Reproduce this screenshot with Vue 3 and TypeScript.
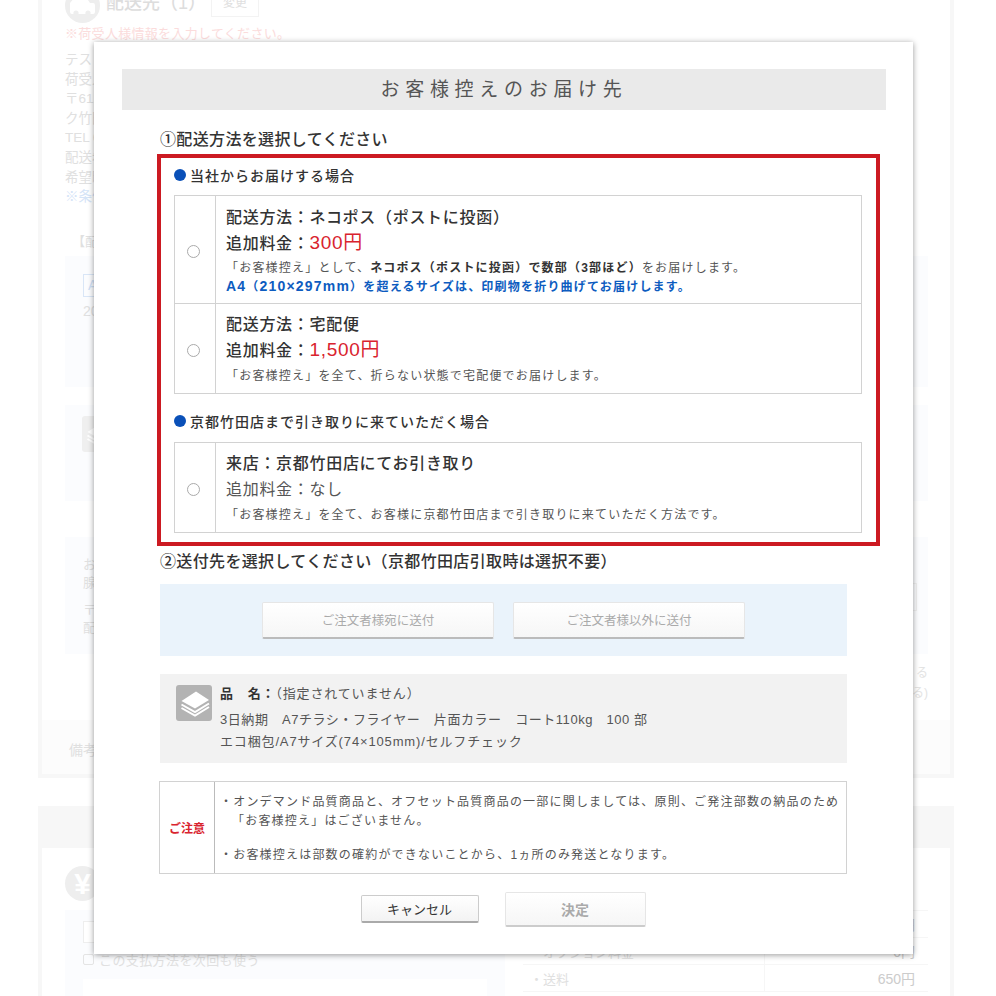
<script setup lang="ts">
interface Option {
  title: string
  price: string
  free?: boolean
}

const addressLines = ['テスト 太郎 様', '荷受人様', '〒612-8000', 'ク竹田 1-1', 'TEL 075-000', '配送希望日', '希望時間帯']
const summaryRows = [
  { label: '', value: '0円' },
  { label: '・オプション料金', value: '0円' },
  { label: '・送料', value: '650円' },
]

const nekopos: Option = { title: '配送方法\uFF1Aネコポス\uFF08ポストに投函\uFF09', price: '300円' }
const takuhai: Option = { title: '配送方法\uFF1A宅配便', price: '1,500円' }
const pickup: Option = { title: '来店\uFF1A京都竹田店にてお引き取り', price: 'なし', free: true }
</script>

<template>
  <div class="page">
    <div class="sheet">
      <section class="panel first">
        <div class="dest-head">
          <span class="circle">
            <svg width="25" height="20" viewBox="0 0 25 20">
              <path d="M5 1h11l4 6h3a2 2 0 0 1 2 2v7a2 2 0 0 1-2 2H2a2 2 0 0 1-2-2V7z" fill="#fff" />
              <circle cx="6" cy="17" r="2.6" fill="#eee" />
              <circle cx="18" cy="17" r="2.6" fill="#eee" />
            </svg>
          </span>
          <span class="dest-title">配送先&#xFF08;1&#xFF09;</span>
          <span class="ghost-btn">変更</span>
        </div>
        <p class="pink">※荷受人様情報を入力してください。</p>
        <ul class="address">
          <li v-for="line in addressLines" :key="line">{{ line }}</li>
          <li class="faint-blue">※条件</li>
        </ul>
        <p class="section-label">【配送</p>
        <div class="tint one">
          <span class="a-tag">A</span>
          <p>20</p>
        </div>
        <div class="tint two">
          <span class="stack-ghost">
            <svg width="36" height="36" viewBox="0 0 36 36">
              <path d="M20 6.5 33 15l-14 8.5L5.5 16z" fill="#fff" />
              <path d="M5.5 19.5 19 27l14-8.5M5.5 23 19 30.5 33 22" fill="none" stroke="#fff" stroke-width="2" />
            </svg>
          </span>
        </div>
        <div class="tint three">
          <p>お客様</p>
          <p>腺</p>
          <p class="spaced">〒61</p>
          <p>配</p>
          <span class="ghost-input"></span>
        </div>
        <p class="side-note">る</p>
        <p class="side-note">る)</p>
        <div class="memo">備考</div>
      </section>

      <section class="panel second">
        <div class="second-head"></div>
        <div class="second-body">
          <span class="circle yen">¥</span>
          <div class="second-grid">
            <div class="tint pay">
              <span class="pay-input"></span>
              <label class="pay-check"><i></i>この支払方法を次回も使う</label>
              <span class="pay-card"></span>
            </div>
            <table class="summary">
              <tbody>
                <tr v-for="row in summaryRows" :key="row.value + row.label">
                  <td class="sum-label">{{ row.label }}</td>
                  <td class="sum-value">{{ row.value }}</td>
                </tr>
              </tbody>
            </table>
          </div>
        </div>
      </section>
    </div>

    <div class="modal">
      <h1 class="modal-title">お客様控えのお届け先</h1>

      <h2 class="step first-step">①配送方法を選択してください</h2>
      <div class="red-box">
        <h3 class="group"><span class="dot"></span>当社からお届けする場合</h3>
        <div class="options">
          <label class="option tall">
            <span class="radio-cell"><input type="radio" name="ship" /></span>
            <span class="option-body">
              <span class="opt-title">{{ nekopos.title }}</span>
              <span class="opt-price">追加料金&#xFF1A;<em>{{ nekopos.price }}</em></span>
              <span class="opt-desc">「お客様控え」として、<b>ネコポス&#xFF08;ポストに投函&#xFF09;で数部&#xFF08;3部ほど&#xFF09;</b>をお届けします。</span>
              <span class="opt-blue"><i>A4</i>&#xFF08;<i>210×297mm</i>&#xFF09;を超えるサイズは、印刷物を折り曲げてお届けします。</span>
            </span>
          </label>
          <label class="option">
            <span class="radio-cell"><input type="radio" name="ship" /></span>
            <span class="option-body">
              <span class="opt-title">{{ takuhai.title }}</span>
              <span class="opt-price">追加料金&#xFF1A;<em>{{ takuhai.price }}</em></span>
              <span class="opt-desc">「お客様控え」を全て、折らない状態で宅配便でお届けします。</span>
            </span>
          </label>
        </div>

        <h3 class="group second-group"><span class="dot"></span>京都竹田店まで引き取りに来ていただく場合</h3>
        <div class="options">
          <label class="option">
            <span class="radio-cell"><input type="radio" name="ship" /></span>
            <span class="option-body">
              <span class="opt-title">{{ pickup.title }}</span>
              <span class="opt-price plain">追加料金&#xFF1A;{{ pickup.price }}</span>
              <span class="opt-desc">「お客様控え」を全て、お客様に京都竹田店まで引き取りに来ていただく方法です。</span>
            </span>
          </label>
        </div>
      </div>

      <h2 class="step second-step">②送付先を選択してください&#xFF08;京都竹田店引取時は選択不要&#xFF09;</h2>
      <div class="send-box">
        <button class="send-btn" disabled>ご注文者様宛に送付</button>
        <button class="send-btn" disabled>ご注文者様以外に送付</button>
      </div>

      <div class="product">
        <span class="product-icon">
          <svg width="36" height="36" viewBox="0 0 36 36">
            <path d="M20 6.5 33 15l-14 8.5L5.5 16z" fill="#fff" />
            <path d="M5.5 19.5 19 27l14-8.5M5.5 23 19 30.5 33 22" fill="none" stroke="#fff" stroke-width="2" />
          </svg>
        </span>
        <div class="product-text">
          <p class="product-name"><b>品&#x3000;名&#xFF1A;</b>&#xFF08;指定されていません&#xFF09;</p>
          <p class="product-spec">3日納期&#x3000;A7チラシ・フライヤー&#x3000;片面カラー&#x3000;コート110kg&#x3000;100 部</p>
          <p class="product-size">エコ梱包/A7サイズ(74×105mm)/セルフチェック</p>
        </div>
      </div>

      <div class="caution">
        <div class="caution-label">ご注意</div>
        <div class="caution-body">
          <p class="c-line">・オンデマンド品質商品と、オフセット品質商品の一部に関しましては、原則、ご発注部数の納品のため</p>
          <p class="c-line indent">「お客様控え」はございません。</p>
          <p class="c-line gap">・お客様控えは部数の確約ができないことから、1ヵ所のみ発送となります。</p>
        </div>
      </div>

      <div class="actions">
        <button class="cancel">キャンセル</button>
        <button class="decide" disabled>決定</button>
      </div>
    </div>
  </div>
</template>

<style>
html, body {
  margin: 0;
  background: #fff;
}
</style>

<style scoped>
* {
  box-sizing: border-box;
}

.page {
  position: relative;
  width: 996px;
  height: 996px;
  overflow: hidden;
  background: #fff;
  font-family: "Liberation Sans", "Noto Sans CJK JP", sans-serif;
  color: #333;
}

p, h1, h2, h3, ul {
  margin: 0;
  padding: 0;
}

/* dimmed page under the modal */
.sheet {
  width: 916px;
  margin: -30px 0 0 38px;
  color: #e0e0e0;
  font-size: 14px;
}

.panel {
  border: 4px solid #f7f7f7;
  background: #fff;
}

.first {
  padding: 14px 0 0;
  height: 808px;
}

.first > * {
  margin-left: 23px;
  margin-right: 22px;
}

.dest-head {
  display: flex;
  align-items: center;
  height: 35px;
}

.circle {
  display: flex;
  align-items: center;
  justify-content: center;
  width: 35px;
  height: 35px;
  border-radius: 50%;
  background: #eee;
  flex: none;
}

.dest-title {
  margin: -10px 0 0 6px;
  font-size: 18px;
  font-weight: 500;
  color: #ddd;
}

.ghost-btn {
  margin: -6px 0 0 5px;
  width: 48px;
  height: 28px;
  line-height: 26px;
  border: 1px solid #f3f3f3;
  text-align: center;
  font-size: 12px;
}

.pink {
  margin-top: 1px;
  line-height: 20px;
  font-size: 13px;
  letter-spacing: 0.3px;
  color: #fbdcdc;
}

.address {
  margin-top: 6px;
  list-style: none;
  line-height: 19.6px;
  font-size: 13.5px;
}

.faint-blue {
  color: #d5e4f7;
}

.section-label {
  margin-top: 25px;
  margin-left: 30px;
  line-height: 20px;
  font-size: 13px;
}

.tint {
  background: #fbfcfe;
}

.one {
  margin-top: 4px;
  height: 131px;
  padding: 18px;
}

.a-tag {
  display: block;
  width: 60px;
  height: 23px;
  padding-left: 4px;
  border: 1px solid #d9e6f7;
  color: #cfe0f6;
  line-height: 21px;
}

.one p {
  margin-top: 6px;
}

.two {
  margin-top: 18px;
  height: 96px;
  padding: 11px 17px;
}

.stack-ghost {
  display: flex;
  align-items: center;
  justify-content: center;
  width: 36px;
  height: 36px;
  border-radius: 3px;
  background: #efefef;
}

.three {
  position: relative;
  margin-top: 36px;
  height: 117px;
  padding: 19px 18px;
  line-height: 18px;
  font-size: 13px;
}

.spaced {
  margin-top: 9px;
}

.ghost-input {
  position: absolute;
  top: 46px;
  right: 11px;
  width: 40px;
  height: 28px;
  border: 1px solid #f0f0f0;
}

.side-note {
  line-height: 20px;
  font-size: 12px;
  text-align: right;
  color: #e3e3e3;
}

.three + .side-note {
  margin-top: 9px;
}

.memo {
  margin: 17px 0 0 !important;
  height: 54px;
  padding: 19px 0 0 27px;
  background: #fcfcfc;
  font-size: 14px;
}

.second {
  margin-top: 28px;
}

.second-head {
  height: 38px;
  background: #f7f7f7;
}

.second-body {
  padding: 18px 22px 0 23px;
  height: 160px;
}

.yen {
  color: #fff;
  font-size: 30px;
  font-weight: 700;
}

.second-grid {
  display: grid;
  grid-template-columns: 440px 405px;
  gap: 18px;
  margin-top: 9px;
}

.pay {
  height: 120px;
  padding: 11px 18px;
}

.pay-input {
  display: block;
  width: 300px;
  height: 22px;
  border: 1px solid #eee;
  background: #fff;
}

.pay-check {
  display: flex;
  align-items: center;
  gap: 5px;
  margin-top: 8px;
  height: 16px;
  font-size: 13px;
  letter-spacing: 0.4px;
}

.pay-check i {
  width: 11px;
  height: 11px;
  border: 1px solid #e4e4e4;
  border-radius: 2px;
}

.pay-card {
  display: block;
  height: 40px;
  margin-top: 12px;
  background: #fff;
}

.summary {
  width: 405px;
  border-collapse: collapse;
  align-self: start;
  border-top: 1px solid #f6f6f6;
  font-size: 13px;
}

.summary td {
  height: 27px;
  border-bottom: 1px solid #f6f6f6;
  padding: 0 7px;
}

.sum-value {
  width: 164px;
  border-left: 1px solid #f6f6f6;
  text-align: right;
  padding-right: 13px !important;
  color: #ccc;
  font-size: 14px;
}

/* modal */
.modal {
  position: absolute;
  top: 42px;
  left: 94px;
  width: 819px;
  height: 912px;
  padding: 27px 27px 0 28px;
  background: #fff;
  box-shadow: 0 1px 6px rgba(0, 0, 0, 0.4);
}

.modal-title {
  height: 41px;
  background: #eaeaea;
  line-height: 42px;
  text-align: center;
  font-size: 19px;
  font-weight: 400;
  letter-spacing: 5.7px;
  color: #555;
}

.step {
  font-size: 16px;
  font-weight: 500;
  letter-spacing: 0.35px;
  line-height: 20px;
  color: #333;
  margin-left: 38px;
}

.first-step {
  margin-top: 20px;
}

.second-step {
  margin-top: 6px;
}

.red-box {
  width: 723px;
  height: 392px;
  margin: 4px 0 0 35px;
  padding: 5px 14px 0 13px;
  border: 4px solid #cc1a22;
}

.group {
  display: flex;
  align-items: center;
  height: 24px;
  font-size: 14px;
  font-weight: 500;
  letter-spacing: 1px;
  color: #333;
}

.dot {
  width: 12px;
  height: 12px;
  margin-right: 4px;
  border-radius: 50%;
  background: #0a50b8;
}

.second-group {
  margin-top: 15px;
}

.options {
  margin-top: 8px;
  border: 1px solid #d2d2d2;
}

.second-group + .options {
  margin-top: 9px;
}

.option {
  display: flex;
  min-height: 89px;
}

.option + .option {
  min-height: 90px;
  border-top: 1px solid #d2d2d2;
}

.tall {
  min-height: 107px;
}

.radio-cell {
  display: flex;
  align-items: center;
  justify-content: center;
  width: 41px;
  padding-right: 3px;
  flex: none;
  border-right: 1px solid #d2d2d2;
}

.radio-cell input {
  appearance: none;
  width: 13px;
  height: 13px;
  margin: 4px 0 0;
  border: 1.5px solid #aaa;
  border-radius: 50%;
  background: #fff;
}

.option-body {
  display: flex;
  flex-direction: column;
  padding: 8px 10px 0;
}

.tall .option-body {
  padding-top: 9px;
}

.opt-title,
.opt-price {
  font-size: 16px;
  font-weight: 500;
  letter-spacing: 0.7px;
  line-height: 26px;
  color: #333;
}

.opt-price em {
  font-style: normal;
  font-weight: 400;
  font-size: 19px;
  line-height: 1;
  color: #d9232e;
}

.opt-price.plain {
  font-weight: 400;
  color: #555;
}

.opt-desc,
.opt-blue {
  font-size: 12px;
  letter-spacing: 1.2px;
  line-height: 18px;
  color: #555;
}

.opt-desc {
  margin-top: 3px;
}

.tall .opt-desc {
  margin-top: 2px;
}

.opt-desc b {
  font-weight: 700;
  color: #333;
}

.opt-blue {
  font-weight: 700;
  color: #0d5cc0;
}

.opt-blue i {
  font-style: normal;
  font-size: 14px;
}

.send-box {
  display: flex;
  justify-content: center;
  gap: 19px;
  width: 687px;
  height: 72px;
  margin: 12px 0 0 38px;
  padding-top: 18px;
  background: #eaf3fb;
}

.send-btn {
  width: 232px;
  height: 37px;
  padding-bottom: 2px;
  border: 1px solid #e6e6e6;
  border-bottom: 2px solid #bbb;
  border-radius: 2px;
  background: linear-gradient(#fff, #f6f6f6);
  font: inherit;
  font-size: 12.5px;
  color: #aaa;
}

.product {
  display: flex;
  gap: 8px;
  width: 687px;
  height: 89px;
  margin: 18px 0 0 38px;
  padding: 11px 16px;
  background: #f2f2f2;
}

.product-icon {
  display: flex;
  align-items: center;
  justify-content: center;
  flex: none;
  width: 36px;
  height: 36px;
  border-radius: 3px;
  background: #b3b3b3;
}

.product-text {
  font-size: 13px;
  line-height: 22px;
  color: #555;
  letter-spacing: 0.85px;
  white-space: pre;
}

.product-name {
  margin-top: -2px;
  margin-bottom: 4px;
}

.product-name b {
  font-weight: 700;
  color: #333;
}

.product-spec {
  letter-spacing: 0.55px;
}

.caution {
  display: flex;
  width: 688px;
  height: 93px;
  margin: 18px 0 0 37px;
  border: 1px solid #d2d2d2;
}

.caution-label {
  display: flex;
  align-items: center;
  justify-content: center;
  flex: none;
  width: 55px;
  border-right: 1px solid #bbb;
  font-size: 12px;
  font-weight: 700;
  color: #d9232e;
}

.caution-body {
  padding: 11px 0 0 5px;
  font-size: 12px;
  letter-spacing: 1.2px;
  line-height: 19px;
  color: #555;
}

.indent {
  padding-left: 12px;
}

.gap {
  margin-top: 15px;
}

.actions {
  display: flex;
  align-items: center;
  justify-content: center;
  gap: 26px;
  height: 36px;
  margin: 17px 0 0 -2px;
}

.cancel {
  width: 118px;
  height: 28px;
  border: 1px solid #ccc;
  border-bottom: 2px solid #aaa;
  border-radius: 2px;
  background: linear-gradient(#fff, #f3f3f3);
  font: inherit;
  font-size: 13px;
  color: #333;
}

.decide {
  width: 141px;
  height: 35px;
  border: 1px solid #e6e6e6;
  border-bottom: 2px solid #ccc;
  border-radius: 2px;
  background: linear-gradient(#fff, #f6f6f6);
  font: inherit;
  font-size: 14px;
  font-weight: 700;
  color: #aaa;
}
</style>
